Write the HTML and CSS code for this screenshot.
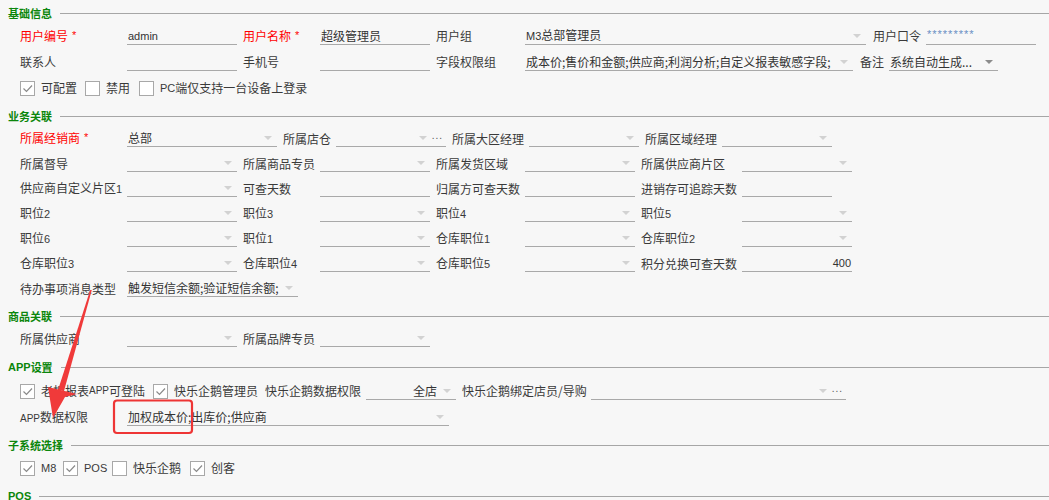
FILE: index.html
```html
<!DOCTYPE html>
<html lang="zh-CN">
<head>
    <meta charset="UTF-8">
    <title>用户资料</title>
    <link rel="stylesheet" href="styles.css">
</head>
<body>
<div class="page">

    <!-- 基础信息 -->
    <div class="group">
        <h3 class="group-title">基础信息</h3>
        <div class="row tall">
            <span class="lbl req w107">用户编号<i>*</i></span>
            <div class="fld w110"><span class="val en">admin</span></div>
            <span class="lbl req w83 ml">用户名称<i>*</i></span>
            <div class="fld w110"><span class="val">超级管理员</span></div>
            <span class="lbl w95 ml">用户组</span>
            <div class="fld w341"><span class="val"><span class="en">M3</span>总部管理员</span><b class="drop"></b></div>
            <span class="lbl w60 ml7">用户口令</span>
            <div class="fld w110"><span class="val pwd">*********</span></div>
        </div>
        <div class="row tall">
            <span class="lbl w107">联系人</span>
            <div class="fld w110"><span class="val"></span></div>
            <span class="lbl w83 ml">手机号</span>
            <div class="fld w110"><span class="val"></span></div>
            <span class="lbl w95 ml">字段权限组</span>
            <div class="fld w328"><span class="val">成本价;售价和金额;供应商;利润分析;自定义报表敏感字段;</span><b class="drop"></b></div>
            <span class="lbl w36 ml7">备注</span>
            <div class="fld w109"><span class="val">系统自动生成...</span><b class="drop dark"></b></div>
        </div>
        <div class="row tall">
            <label class="chk w65"><span class="box on"><svg viewBox="0 0 13 13"><path d="M2.5 6.5l3 3 5.5-6"/></svg></span>可配置</label>
            <label class="chk w54"><span class="box"></span>禁用</label>
            <label class="chk"><span class="box"></span><span class="en">PC</span>端仅支持一台设备上登录</label>
        </div>
    </div>

    <!-- 业务关联 -->
    <div class="group">
        <h3 class="group-title">业务关联</h3>
        <div class="row">
            <span class="lbl req w107">所属经销商<i>*</i></span>
            <div class="fld w150"><span class="val">总部</span><b class="drop"></b></div>
            <span class="lbl w59 ml">所属店仓</span>
            <div class="fld w110"><span class="val"></span><b class="drop"></b><span class="more">...</span></div>
            <span class="lbl w83 ml">所属大区经理</span>
            <div class="fld w110"><span class="val"></span><b class="drop"></b></div>
            <span class="lbl w83 ml">所属区域经理</span>
            <div class="fld w110"><span class="val"></span><b class="drop"></b></div>
        </div>
        <div class="row">
            <span class="lbl w107">所属督导</span>
            <div class="fld w110"><span class="val"></span><b class="drop"></b></div>
            <span class="lbl w83 ml">所属商品专员</span>
            <div class="fld w110"><span class="val"></span><b class="drop"></b></div>
            <span class="lbl w95 ml">所属发货区域</span>
            <div class="fld w110"><span class="val"></span><b class="drop"></b></div>
            <span class="lbl w107 ml">所属供应商片区</span>
            <div class="fld w110"><span class="val"></span><b class="drop"></b></div>
        </div>
        <div class="row">
            <span class="lbl w107">供应商自定义片区<span class="en">1</span></span>
            <div class="fld w110"><span class="val"></span><b class="drop"></b></div>
            <span class="lbl w83 ml">可查天数</span>
            <div class="fld w110"><span class="val"></span></div>
            <span class="lbl w95 ml">归属方可查天数</span>
            <div class="fld w110"><span class="val"></span></div>
            <span class="lbl w107 ml">进销存可追踪天数</span>
            <div class="fld w90"><span class="val"></span></div>
        </div>
        <div class="row">
            <span class="lbl w107">职位<span class="en">2</span></span>
            <div class="fld w110"><span class="val"></span><b class="drop"></b></div>
            <span class="lbl w83 ml">职位<span class="en">3</span></span>
            <div class="fld w110"><span class="val"></span><b class="drop"></b></div>
            <span class="lbl w95 ml">职位<span class="en">4</span></span>
            <div class="fld w110"><span class="val"></span><b class="drop"></b></div>
            <span class="lbl w107 ml">职位<span class="en">5</span></span>
            <div class="fld w110"><span class="val"></span><b class="drop"></b></div>
        </div>
        <div class="row">
            <span class="lbl w107">职位<span class="en">6</span></span>
            <div class="fld w110"><span class="val"></span><b class="drop"></b></div>
            <span class="lbl w83 ml">职位<span class="en">1</span></span>
            <div class="fld w110"><span class="val"></span><b class="drop"></b></div>
            <span class="lbl w95 ml">仓库职位<span class="en">1</span></span>
            <div class="fld w110"><span class="val"></span><b class="drop"></b></div>
            <span class="lbl w107 ml">仓库职位<span class="en">2</span></span>
            <div class="fld w110"><span class="val"></span><b class="drop"></b></div>
        </div>
        <div class="row">
            <span class="lbl w107">仓库职位<span class="en">3</span></span>
            <div class="fld w110"><span class="val"></span><b class="drop"></b></div>
            <span class="lbl w83 ml">仓库职位<span class="en">4</span></span>
            <div class="fld w110"><span class="val"></span><b class="drop"></b></div>
            <span class="lbl w95 ml">仓库职位<span class="en">5</span></span>
            <div class="fld w110"><span class="val"></span><b class="drop"></b></div>
            <span class="lbl w107 ml">积分兑换可查天数</span>
            <div class="fld w110"><span class="val num en">400</span></div>
        </div>
        <div class="row">
            <span class="lbl w107">待办事项消息类型</span>
            <div class="fld w171"><span class="val">触发短信余额;验证短信余额;</span><b class="drop"></b></div>
        </div>
    </div>

    <!-- 商品关联 -->
    <div class="group">
        <h3 class="group-title">商品关联</h3>
        <div class="row">
            <span class="lbl w107">所属供应商</span>
            <div class="fld w110"><span class="val"></span><b class="drop"></b></div>
            <span class="lbl w83 ml">所属品牌专员</span>
            <div class="fld w110"><span class="val"></span><b class="drop"></b></div>
        </div>
    </div>

    <!-- APP设置 -->
    <div class="group wide">
        <h3 class="group-title"><span class="en">APP</span>设置</h3>
        <div class="row chkrow">
            <label class="chk w133"><span class="box on"><svg viewBox="0 0 13 13"><path d="M2.5 6.5l3 3 5.5-6"/></svg></span>老板报表<span class="en sm">APP</span>可登陆</label>
            <label class="chk w112"><span class="box on"><svg viewBox="0 0 13 13"><path d="M2.5 6.5l3 3 5.5-6"/></svg></span>快乐企鹅管理员</label>
            <span class="lbl w101">快乐企鹅数据权限</span>
            <div class="fld w90"><span class="val right">全店</span><b class="drop"></b></div>
            <span class="lbl w135 ml">快乐企鹅绑定店员/导购</span>
            <div class="fld w255"><span class="val"></span><b class="drop"></b><span class="more">...</span></div>
        </div>
        <div class="row">
            <span class="lbl w107"><span class="en sm">APP</span>数据权限</span>
            <div class="fld w322"><span class="val">加权成本价;出库价;供应商</span><b class="drop"></b></div>
        </div>
    </div>

    <!-- 子系统选择 -->
    <div class="group">
        <h3 class="group-title">子系统选择</h3>
        <div class="row tall">
            <label class="chk w43"><span class="box on"><svg viewBox="0 0 13 13"><path d="M2.5 6.5l3 3 5.5-6"/></svg></span><span class="en">M8</span></label>
            <label class="chk w49"><span class="box on"><svg viewBox="0 0 13 13"><path d="M2.5 6.5l3 3 5.5-6"/></svg></span><span class="en">POS</span></label>
            <label class="chk w78"><span class="box"></span>快乐企鹅</label>
            <label class="chk"><span class="box on"><svg viewBox="0 0 13 13"><path d="M2.5 6.5l3 3 5.5-6"/></svg></span>创客</label>
        </div>
    </div>

    <!-- POS -->
    <div class="group">
        <h3 class="group-title"><span class="en">POS</span></h3>
    </div>

    <!-- 标注：箭头 + 方框 -->
    <svg class="mark" width="1049" height="500" viewBox="0 0 1049 500">
        <polygon points="90.2,290 91.8,290 64,391 58,390" />
        <polygon points="48,387 77,394 65,397 53,418" />
        <rect x="114" y="400.5" width="78" height="32.5" rx="3" ry="3" />
    </svg>
</div>
</body>
</html>
```

FILE: styles.css
```css
* {
    box-sizing: border-box;
}

body {
    margin: 0;
    background-color: #f7f7f7;
    font-family: "Noto Sans CJK SC", "Liberation Sans", sans-serif;
    font-size: 12px;
    line-height: 16px;
    color: #3a3a3a;
}

.page {
    position: relative;
    width: 1049px;
    height: 500px;
    padding-top: 3px;
    overflow: hidden;
}

.en {
    font-family: "Liberation Sans", Arial, sans-serif;
    font-size: 11px;
}

.en.sm {
    font-size: 10px;
}

/* 分组标题 + 横线 */
.group {
    margin-top: 5px;
}

.group.wide {
    margin-top: 6px;
}

.group:first-child {
    margin-top: 0;
}

.group-title {
    display: flex;
    align-items: center;
    height: 20px;
    margin: 0;
    padding-left: 8px;
    font-size: 11px;
    font-weight: bold;
    color: #0b860b;
}

.group-title .en {
    font-size: 11px;
}

.group-title::after {
    content: "";
    flex: 1;
    margin-left: 8px;
    border-top: 1px solid #a6a6a6;
}

/* 表单行 */
.row {
    display: flex;
    align-items: center;
    height: 25px;
    padding-left: 20px;
}

.row.tall {
    height: 26px;
}

.row.chkrow {
    height: 28px;
}

.lbl {
    flex: none;
    white-space: nowrap;
}

.lbl.ml {
    padding-left: 6px;
}

.lbl.ml7 {
    padding-left: 7px;
}

.req {
    color: #f00;
}

.req i {
    font-style: normal;
    font-family: "Liberation Sans", Arial, sans-serif;
    font-size: 11px;
    margin-left: 4px;
    position: relative;
    top: -2px;
}

.fld {
    flex: none;
    display: flex;
    align-items: center;
    height: 17px;
    padding-left: 1px;
    border-bottom: 1px solid #a9a9a9;
    color: #333;
}

.fld .val {
    flex: 1;
    overflow: hidden;
    white-space: nowrap;
}

.fld .val.right {
    text-align: right;
    padding-right: 3px;
}

.fld .val.num {
    text-align: right;
    padding-right: 1px;
}

.fld .val.pwd {
    font-family: "Liberation Sans", Arial, sans-serif;
    font-size: 11px;
    letter-spacing: 1px;
    color: #6a8fc4;
    position: relative;
    top: -2px;
}

/* 下拉小三角 */
.drop {
    flex: none;
    width: 0;
    height: 0;
    margin: 0 5px 0 3px;
    border-left: 4px solid transparent;
    border-right: 4px solid transparent;
    border-top: 4px solid #d2d2d2;
}

.drop.dark {
    border-top-color: #8c8c8c;
}

.more {
    flex: none;
    margin-right: 3px;
    font-family: "Liberation Sans", Arial, sans-serif;
    font-size: 10px;
    letter-spacing: 1px;
    color: #555;
    position: relative;
    top: -2px;
}

/* 复选框 */
.chk {
    flex: none;
    display: flex;
    align-items: center;
    white-space: nowrap;
}

.box {
    flex: none;
    width: 15px;
    height: 15px;
    margin-right: 6px;
    background-color: #fff;
    border: 1px solid #a8a8a8;
}

.box svg {
    display: block;
    width: 13px;
    height: 13px;
    fill: none;
    stroke: #8a8a8a;
    stroke-width: 1.2;
}

.w36 { width: 36px; }
.w43 { width: 43px; }
.w49 { width: 49px; }
.w54 { width: 54px; }
.w59 { width: 59px; }
.w60 { width: 60px; }
.w65 { width: 65px; }
.w78 { width: 78px; }
.w83 { width: 83px; }
.w90 { width: 90px; }
.w95 { width: 95px; }
.w101 { width: 101px; }
.w107 { width: 107px; }
.w109 { width: 109px; }
.w110 { width: 110px; }
.w112 { width: 112px; }
.w133 { width: 133px; }
.w135 { width: 135px; }
.w150 { width: 150px; }
.w171 { width: 171px; }
.w255 { width: 255px; }
.w322 { width: 322px; }
.w328 { width: 328px; }
.w341 { width: 341px; }

/* 红色标注层 */
.mark {
    position: absolute;
    top: 0;
    left: 0;
    pointer-events: none;
}

.mark polygon {
    fill: #f03a3a;
}

.mark rect {
    fill: none;
    stroke: #ee3535;
    stroke-width: 2.2;
}
```
